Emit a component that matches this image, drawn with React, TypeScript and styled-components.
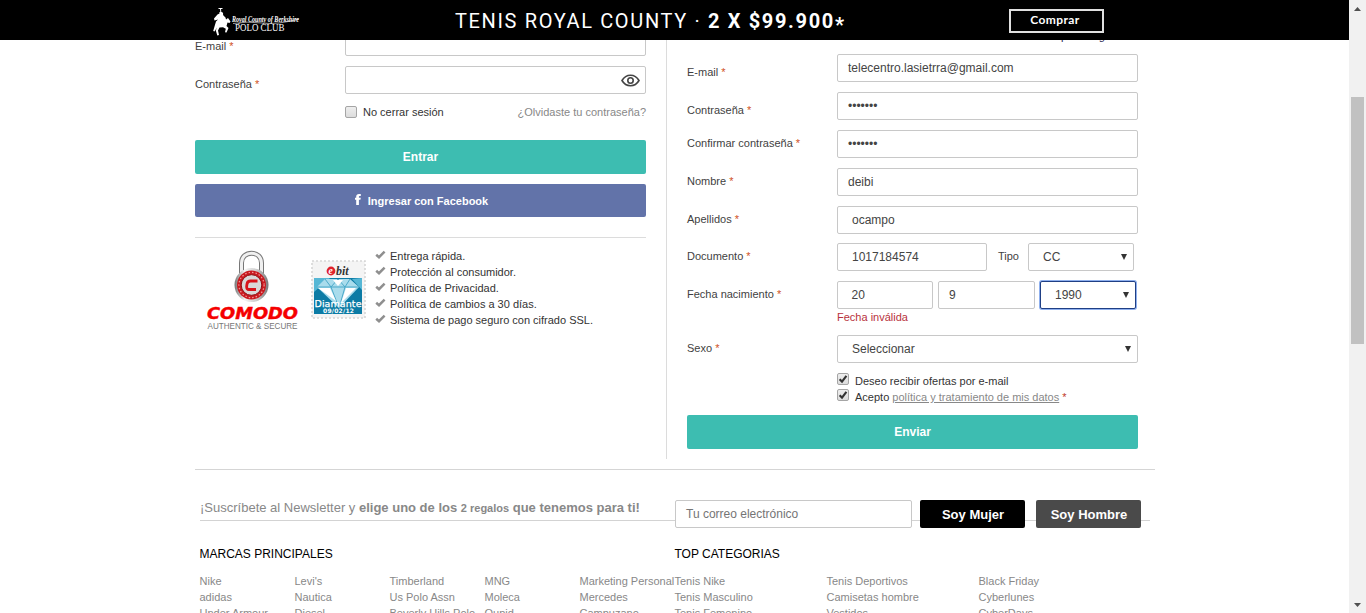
import React from 'react';
import styled, { createGlobalStyle } from 'styled-components';

const GlobalStyle = createGlobalStyle`
  * { box-sizing: border-box; }
  body {
    margin: 0;
    overflow: hidden;
    background: #fff;
    color: #3f3f3f;
    font-family: "Liberation Sans", Arial, sans-serif;
    font-size: 11px;
    line-height: 16px;
  }
`;

const Screen = styled.div`
  display: flex;
  height: 613px;
  width: 1366px;
  overflow: hidden;
`;

const Page = styled.div`
  position: relative;
  width: 1349px;
  height: 613px;
  overflow: hidden;
`;

const Scrollbar = styled.div`
  display: flex;
  flex-direction: column;
  align-items: center;
  justify-content: space-between;
  width: 17px;
  padding: 7px 0 6px;
  background: #f1f1f1;
`;

const ScrollThumb = styled.div`
  width: 13px;
  height: 247px;
  margin: 86px 0 auto;
  background: #c1c1c1;
`;

const Banner = styled.header`
  position: absolute;
  z-index: 2;
  top: 0;
  left: 0;
  display: flex;
  align-items: center;
  width: 100%;
  height: 40px;
  padding-left: 210px;
  background: #000;
  color: #fff;
`;

const BannerText = styled.div`
  width: 400px;
  margin-left: 153px;
  padding-top: 2px;
  font: 400 20px/24px Roboto, sans-serif;
  letter-spacing: 1.65px;
  white-space: nowrap;
  b { font-weight: 700; }
  sub { font-size: 20px; line-height: 0; vertical-align: -4px; }
`;

const BuyButton = styled.div`
  width: 95px;
  height: 24px;
  margin: 1px 0 0 154px;
  padding-right: 3px;
  border: 2px solid #e0e0e0;
  font: 700 12px/18px Lato, sans-serif;
  letter-spacing: 0.4px;
  text-align: center;
`;

const Content = styled.main`
  width: 960px;
  margin-left: 195px;
  padding-top: 28px;
`;

const Columns = styled.div`
  display: flex;
  height: 442px;
  border-bottom: 1px solid #d5d5d5;
`;

const Login = styled.section`
  width: 472px;
  height: 431px;
  padding-right: 20px;
  border-right: 1px solid #dcdcdc;
`;

const Register = styled.section`
  width: 451px;
  margin-left: 20px;
`;

const Row = styled.div<{ $gap?: number }>`
  display: flex;
  margin-bottom: ${(p) => p.$gap ?? 10}px;
`;

const Label = styled.label<{ $top?: number }>`
  flex: none;
  width: 150px;
  padding-top: ${(p) => p.$top ?? 5}px;
  white-space: nowrap;
  em { color: #d0521c; font-style: normal; }
`;

const Field = styled.div<{ $w?: number; $pad?: number; $focus?: boolean; $right?: number }>`
  display: flex;
  align-items: center;
  justify-content: space-between;
  width: ${(p) => p.$w ?? 301}px;
  height: 28px;
  padding: 0 ${(p) => p.$right ?? 6}px 0 ${(p) => p.$pad ?? 10}px;
  border: 1px solid ${(p) => (p.$focus ? '#1f3f85' : '#c8c8c8')};
  border-radius: 2px;
  box-shadow: ${(p) => (p.$focus ? '0 0 0 1px #8fb0ee' : 'none')};
  background: #fff;
  color: #444;
  font-size: 12px;
  white-space: nowrap;
`;

const Tipo = styled.span`
  width: 41px;
  padding: 5px 0 0 11px;
`;

const ErrorText = styled.p`
  margin: 0 0 10px 150px;
  color: #b8323c;
`;

const Obligatory = styled.p`
  height: 26px;
  margin: 0;
  text-align: right;
  color: #2a2a55;
`;

const CheckRow = styled.div<{ $left?: number }>`
  display: flex;
  height: 16px;
  margin-left: ${(p) => p.$left ?? 150}px;
  color: #333;
  white-space: nowrap;
  a { color: #888; text-decoration: underline; }
  em { color: #c0392b; font-style: normal; }
`;

const Box = styled.span<{ $gap: number; $top: number }>`
  display: block;
  flex: none;
  width: 12px;
  height: 12px;
  margin: ${(p) => p.$top}px ${(p) => p.$gap}px 0 0;
  border: 1px solid #a5a5a5;
  border-radius: 2px;
  background: linear-gradient(#eee, #dcdcdc);
  svg { display: block; }
`;

const Forgot = styled.a`
  margin-left: auto;
  color: #888;
`;

const Button = styled.div<{ $h?: number; $facebook?: boolean }>`
  display: flex;
  align-items: center;
  justify-content: center;
  width: 451px;
  height: ${(p) => p.$h ?? 34}px;
  border-radius: 2px;
  background: ${(p) => (p.$facebook ? '#6273a9' : '#3dbdb1')};
  color: #fff;
  font-size: ${(p) => (p.$facebook ? 11 : 12)}px;
  font-weight: 700;
  svg { margin: -2px 7px 0 2px; }
`;

const Trust = styled.div`
  display: flex;
  align-items: flex-start;
  width: 451px;
  margin-top: 20px;
  padding-top: 10px;
  border-top: 1px solid #dcdcdc;
`;

const Stamp = styled.div`
  margin: 12px 0 0 12px;
  svg { display: block; }
`;

const TrustList = styled.ul`
  margin: 0 0 0 8px;
  padding: 0;
  list-style: none;
  color: #333;
  li { display: flex; height: 16px; white-space: nowrap; }
  svg { flex: none; margin: 2px 4px 0 0; }
`;

const BirthDate = styled.div`
  display: flex;
  gap: 5px;
`;

const Submit = styled.div`
  margin-top: 10px;
`;

const Newsletter = styled.section`
  display: flex;
  width: 950px;
  height: 28px;
  margin: 30px 0 0 5px;
  background: linear-gradient(#d3d3d3, #d3d3d3) 0 20px / 100% 1px no-repeat;
`;

const Pitch = styled.p`
  width: 475px;
  height: 16px;
  margin: 0;
  color: #888;
  font-size: 13px;
  white-space: nowrap;
  small { font-size: 11px; }
`;

const Gender = styled.div<{ $bg: string; $gap: number }>`
  width: 105px;
  height: 28px;
  margin-left: ${(p) => p.$gap}px;
  padding-left: 1px;
  border-radius: 2px;
  background: ${(p) => p.$bg};
  color: #fff;
  font-size: 13px;
  font-weight: 700;
  line-height: 29px;
  text-align: center;
`;

const Placeholder = styled.span`
  color: #757575;
`;

const Links = styled.section`
  display: flex;
  margin: 18px 0 0 4.5px;
`;

const LinkGroup = styled.div`
  width: 475px;
  flex: none;
`;

const GroupTitle = styled.h4`
  margin: 0 0 11px;
  color: #000;
  font-size: 12px;
  font-weight: 400;
`;

const LinkGrid = styled.div<{ $col: number; $n: number }>`
  display: grid;
  grid-template-columns: repeat(${(p) => p.$n}, ${(p) => p.$col}px);
  grid-auto-rows: 16px;
  color: #888;
  white-space: nowrap;
`;

const Req = () => <em>*</em>;

const Arrow = () => (
  <svg width="6" height="6" viewBox="0 0 6 6"><path d="M0 0H6L3 6Z" fill="#333" /></svg>
);

const Checkbox = ({ checked, gap = 6, top = 0 }: { checked?: boolean; gap?: number; top?: number }) => (
  <Box $gap={gap} $top={top}>
    {checked && (
      <svg width="10" height="10" viewBox="0 0 10 10">
        <path d="M1.600 5.200L4 7.600L8.400 1.800" fill="none" stroke="#333" strokeWidth="2.100" />
      </svg>
    )}
  </Box>
);

const Logo = () => (
  <svg width="92" height="32" viewBox="210 4 92 32" fill="#fff">
    <path d="M218.500 8H222.500V9H221L221.300 12C223 12 223.500 13.500 223 15L225.500 17.500L226 19.500L228 18L230.500 21.500L229.500 23L227.500 22.500L226.500 26L228.500 28L226.500 32.500L225 32.300L225.800 28.800L223 27.200L219.500 27.500L218 30.500L219 35L217.300 35.500L215.800 30.500L217 27.500L214.500 31.500L213.200 31L214.800 25.500L216 21.500L218 19.500L214.500 20.500L214 18.500L217.500 14.500L219.500 13.500L219.200 12.500L220.300 11.800L220 9H218.500Z" />
    <text x="232" y="22" fontFamily="Liberation Serif, serif" fontStyle="italic" fontWeight="700" fontSize="9" textLength="67" lengthAdjust="spacingAndGlyphs">Royal County of Berkshire</text>
    <path d="M233 23.500Q247 21 262 23T299 19" fill="none" stroke="#fff" strokeWidth=".6" />
    <text x="235" y="31" fontFamily="Liberation Serif, serif" fontSize="10.500" textLength="49.500" lengthAdjust="spacingAndGlyphs">POLO CLUB</text>
  </svg>
);

const Eye = () => (
  <svg width="19" height="13" viewBox="0 0 19 13" fill="none" stroke="#444" strokeWidth="1.600">
    <path d="M1 6.500C3 3 6 1.200 9.500 1.200S16 3 18 6.500C16 10 13 11.800 9.500 11.800S3 10 1 6.500Z" />
    <circle cx="9.500" cy="6.500" r="2.700" />
  </svg>
);

const FacebookMark = () => (
  <svg width="6" height="11" viewBox="0 0 6 11">
    <path d="M1.200 11V5.800H0V3.800H1.200V2.600C1.200.9 2.200 0 4 0H5.800V2H4.700C4.100 2 3.900 2.300 3.900 2.800V3.800H5.800L5.400 5.800H3.900V11Z" fill="#fff" />
  </svg>
);

const Comodo = () => (
  <svg width="104" height="84" viewBox="195 248 104 84">
    <defs>
      <linearGradient id="steel" x1="0" x2="1">
        <stop offset="0" stopColor="#777" /><stop offset=".3" stopColor="#f4f4f4" />
        <stop offset=".65" stopColor="#ccc" /><stop offset="1" stopColor="#777" />
      </linearGradient>
    </defs>
    <path d="M241.500 276V263C241.500 250 261.500 250 261.500 263V276" fill="none" stroke="#777" strokeWidth="5" />
    <path d="M241.500 276V263C241.500 250 261.500 250 261.500 263V276" fill="none" stroke="#f0f0f0" strokeWidth="3" />
    <circle cx="251.500" cy="285" r="17" fill="url(#steel)" />
    <circle cx="251.500" cy="285" r="14.500" fill="#c9191f" />
    <circle cx="251.500" cy="285" r="12.600" fill="none" stroke="#ef9a9a" strokeWidth="1.200" strokeDasharray="1.500 2" />
    <circle cx="251.500" cy="285" r="10.300" fill="#d9d9d9" stroke="#8e1115" />
    <path d="M257.500 281H250.500Q247.500 281 247 284L246.700 286Q246.300 289.500 249 289.500H256" fill="none" stroke="#d8141b" strokeWidth="2.800" />
    <text x="207" y="318.500" fontFamily="DejaVu Sans, sans-serif" fontWeight="700" fontStyle="italic" fontSize="15.500" fill="#f50000" stroke="#f50000" strokeWidth=".4" textLength="91" lengthAdjust="spacingAndGlyphs">COMODO</text>
    <text x="207.500" y="329" fontFamily="Liberation Sans, sans-serif" fontSize="9.500" fill="#777" textLength="90" lengthAdjust="spacingAndGlyphs">AUTHENTIC &amp; SECURE</text>
  </svg>
);

const Ebit = () => (
  <svg width="56" height="60" viewBox="311 260 56 60">
    <rect x="312" y="261" width="53" height="57" fill="#f4f4f4" stroke="#d6d6d6" strokeWidth="1.600" strokeDasharray="2 2" />
    <rect x="314" y="278" width="48" height="36" fill="#0b7ba5" />
    <path d="M314 278L330 278L314 292ZM362 278V290L352 279Z" fill="#56b7d5" />
    <path d="M325 279H350L359 287L339 308L317 287Z" fill="#a9dcec" />
    <path d="M325 279L331 287L338 279L345 287L350 279M317 287H359M331 287L339 308L345 287" fill="none" stroke="#4ba9c9" />
    <path d="M333 280L338 286L343 280ZM318 288L330 288L336 301ZM346 288L356 288L341 303Z" fill="#fff" />
    <circle cx="331" cy="271" r="4.400" fill="#e0212b" />
    <text x="328.500" y="274" fontFamily="Liberation Serif, serif" fontWeight="700" fontStyle="italic" fontSize="9.500" fill="#fff">e</text>
    <text x="336" y="274.500" fontFamily="Liberation Serif, serif" fontWeight="700" fontStyle="italic" fontSize="12" fill="#333" textLength="12.500">bit</text>
    <text x="314.500" y="306.500" fontFamily="DejaVu Sans, sans-serif" fontSize="9.500" fill="#fff" stroke="#fff" strokeWidth=".25" textLength="47">Diamante</text>
    <text x="323" y="313.300" fontFamily="DejaVu Sans, sans-serif" fontWeight="700" fontSize="6" fill="#fff" textLength="31">09/02/12</text>
  </svg>
);

const Tick = () => (
  <svg width="11" height="9" viewBox="0 0 11 9">
    <path d="M1.200 4.700L4 7.200L9.600 1.600" fill="none" stroke="#8f8f8f" strokeWidth="2.500" />
  </svg>
);

const benefits = [
  'Entrega rápida.',
  'Protección al consumidor.',
  'Política de Privacidad.',
  'Política de cambios a 30 días.',
  'Sistema de pago seguro con cifrado SSL.',
];

const brands = [
  'Nike', "Levi's", 'Timberland', 'MNG', 'Marketing Personal',
  'adidas', 'Nautica', 'Us Polo Assn', 'Moleca', 'Mercedes',
  'Under Armour', 'Diesel', 'Beverly Hills Polo', 'Qupid', 'Campuzano',
];

const categories = [
  'Tenis Nike', 'Tenis Deportivos', 'Black Friday',
  'Tenis Masculino', 'Camisetas hombre', 'Cyberlunes',
  'Tenis Femenino', 'Vestidos', 'CyberDays',
];

export default function App() {
  return (
    <Screen>
      <GlobalStyle />
      <Page>
        <Banner>
          <Logo />
          <BannerText>TENIS ROYAL COUNTY · <b>2 X $99.900<sub>*</sub></b></BannerText>
          <BuyButton>Comprar</BuyButton>
        </Banner>
        <Content>
          <Columns>
            <Login>
              <Row><Label $top={10}>E-mail <Req /></Label><Field /></Row>
              <Row><Label $top={10}>Contraseña <Req /></Label><Field $right={5}><span /><Eye /></Field></Row>
              <Row $gap={20}>
                <CheckRow>
                  <Checkbox top={2} />No cerrar sesión
                </CheckRow>
                <Forgot>¿Olvidaste tu contraseña?</Forgot>
              </Row>
              <Row><Button>Entrar</Button></Row>
              <Row $gap={0}><Button $h={33} $facebook><FacebookMark />Ingresar con Facebook</Button></Row>
              <Trust>
                <Comodo />
                <Stamp><Ebit /></Stamp>
                <TrustList>
                  {benefits.map((b) => <li key={b}><Tick />{b}</li>)}
                </TrustList>
              </Trust>
            </Login>
            <Register>
              <Obligatory>* Campos obligatorios</Obligatory>
              <Row><Label $top={10}>E-mail <Req /></Label><Field>telecentro.lasietrra@gmail.com</Field></Row>
              <Row><Label $top={10}>Contraseña <Req /></Label><Field>•••••••</Field></Row>
              <Row><Label>Confirmar contraseña <Req /></Label><Field>•••••••</Field></Row>
              <Row><Label>Nombre <Req /></Label><Field>deibi</Field></Row>
              <Row $gap={9}><Label>Apellidos <Req /></Label><Field $pad={14}>ocampo</Field></Row>
              <Row>
                <Label>Documento <Req /></Label>
                <Field $w={150} $pad={14}>1017184574</Field>
                <Tipo>Tipo</Tipo>
                <Field $w={106} $pad={14}>CC<Arrow /></Field>
              </Row>
              <Row $gap={0}>
                <Label>Fecha nacimiento <Req /></Label>
                <BirthDate>
                  <Field $w={96} $pad={13.5}>20</Field>
                  <Field $w={97} $pad={10}>9</Field>
                  <Field $w={96} $pad={14} $focus>1990<Arrow /></Field>
                </BirthDate>
              </Row>
              <ErrorText>Fecha inválida</ErrorText>
              <Row><Label>Sexo <Req /></Label><Field $pad={14}>Seleccionar<Arrow /></Field></Row>
              <CheckRow><Checkbox checked />Deseo recibir ofertas por e-mail</CheckRow>
              <CheckRow>
                <Checkbox checked />
                <span>Acepto <a>política y tratamiento de mis datos</a> <Req /></span>
              </CheckRow>
              <Submit><Button>Enviar</Button></Submit>
            </Register>
          </Columns>
          <Newsletter>
            <Pitch>
              ¡Suscríbete al Newsletter y <b>elige uno de los <small>2 regalos</small> que tenemos para ti!</b>
            </Pitch>
            <Field $w={237}><Placeholder>Tu correo electrónico</Placeholder></Field>
            <Gender $bg="#000" $gap={8}>Soy Mujer</Gender>
            <Gender $bg="#4a4a4a" $gap={11}>Soy Hombre</Gender>
          </Newsletter>
          <Links>
            <LinkGroup>
              <GroupTitle>MARCAS PRINCIPALES</GroupTitle>
              <LinkGrid $n={5} $col={95}>{brands.map((b) => <a key={b}>{b}</a>)}</LinkGrid>
            </LinkGroup>
            <LinkGroup>
              <GroupTitle>TOP CATEGORIAS</GroupTitle>
              <LinkGrid $n={3} $col={152}>{categories.map((c) => <a key={c}>{c}</a>)}</LinkGrid>
            </LinkGroup>
          </Links>
        </Content>
      </Page>
      <Scrollbar>
        <svg width="7" height="4" viewBox="0 0 7 4"><path d="M3.500 0L7 4H0Z" fill="#505050" /></svg>
        <ScrollThumb />
        <svg width="7" height="4" viewBox="0 0 7 4"><path d="M0 0H7L3.500 4Z" fill="#505050" /></svg>
      </Scrollbar>
    </Screen>
  );
}
